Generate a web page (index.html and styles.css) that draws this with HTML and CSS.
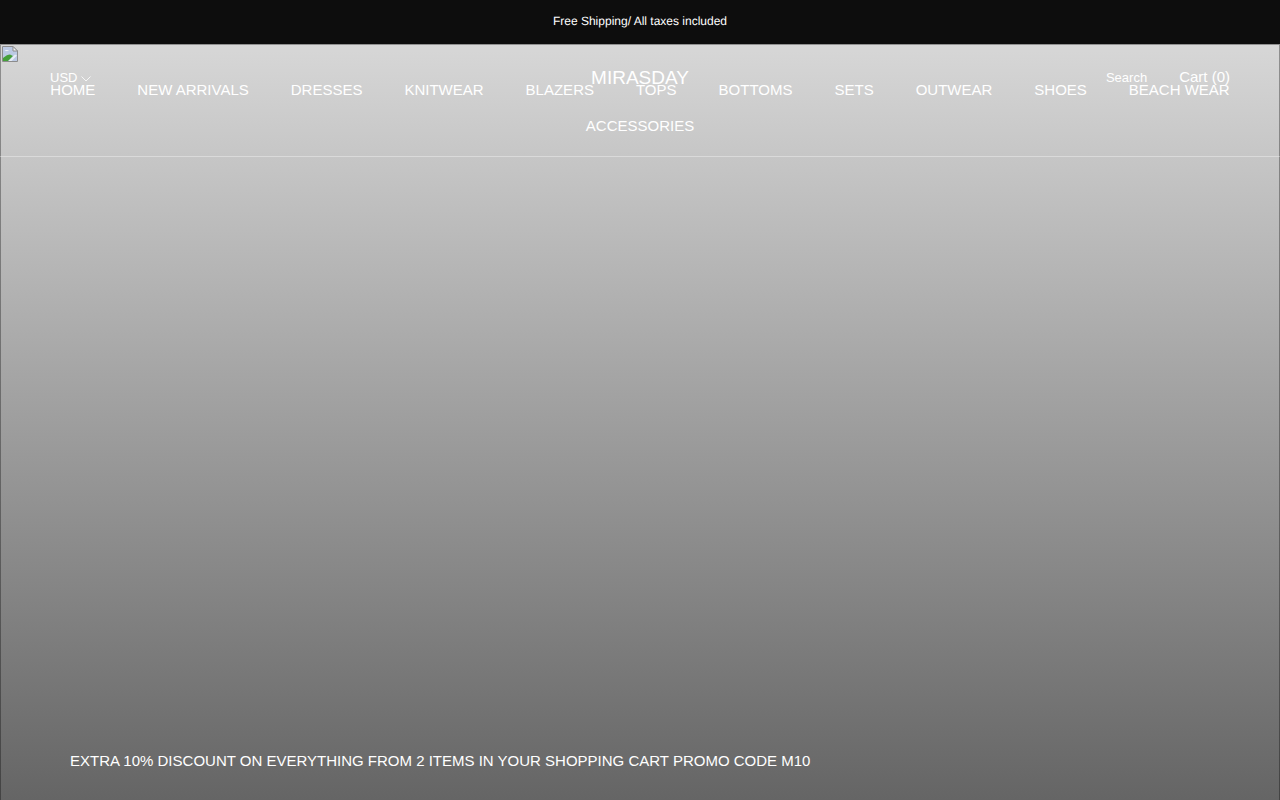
FILE: index.html
```html
<!DOCTYPE html>
<html lang="en">
<head>
    <meta charset="UTF-8">
    <meta name="viewport" content="width=device-width, initial-scale=1.0">
    <title>MIRASDAY</title>
    <link rel="stylesheet" href="styles.css">
</head>
<body>
    <div class="announcement">Free Shipping/ All taxes included</div>

    <section class="hero">
        <svg class="broken-image" width="16" height="16" viewBox="0 0 16 16">
            <path d="M.5.5h10.500l4.500 4.500v10.500h-15z" fill="#bccae4" stroke="#8c8c8c"/>
            <path d="M11 .5v4.500h4.500z" fill="#f2f2f2" stroke="#8c8c8c"/>
            <path d="M2.500 5c1-1.500 3.500-1.500 4.500 0z" fill="#f4f6fa"/>
            <path d="M1 15v-3c3-2.500 5-3.500 7-3.500l3 1.500-5 5z" fill="#45a03a"/>
            <path d="M6.500 15l6.500-6.500 2 1-5.500 5.500z" fill="#e8edf5"/>
        </svg>

        <header class="site-header">
            <div class="header-top">
                <div class="currency">USD
                    <svg class="chevron" width="10" height="6" viewBox="0 0 10 6"><path d="M.5.500l4.500 4.500 4.500-4.500" fill="none" stroke="#fff" stroke-width=".8"/></svg>
                </div>
                <a class="logo" href="#">MIRASDAY</a>
                <div class="header-links">
                    <a class="search-link" href="#">Search</a>
                    <a class="cart-link" href="#">Cart (0)</a>
                </div>
            </div>
            <nav class="main-nav">
                <a href="#">HOME</a>
                <a href="#">NEW ARRIVALS</a>
                <a href="#">DRESSES</a>
                <a href="#">KNITWEAR</a>
                <a href="#">BLAZERS</a>
                <a href="#">TOPS</a>
                <a href="#">BOTTOMS</a>
                <a href="#">SETS</a>
                <a href="#">OUTWEAR</a>
                <a href="#">SHOES</a>
                <a href="#">BEACH WEAR</a>
                <a href="#">ACCESSORIES</a>
            </nav>
        </header>

        <p class="promo">EXTRA 10% DISCOUNT ON EVERYTHING FROM 2 ITEMS IN YOUR SHOPPING CART PROMO CODE M10</p>
    </section>
</body>
</html>
```

FILE: styles.css
```css
html, body {
    height: 100%;
}
body {
    font-family: "Liberation Sans", Arial, sans-serif;
    margin: 0;
    background-color: #fff;
    color: #fff;
    overflow: hidden;
}
a {
    color: inherit;
    text-decoration: none;
}
.announcement {
    height: 44px;
    line-height: 42px;
    background-color: #0d0d0d;
    font-size: 12px;
    text-align: center;
    text-rendering: geometricPrecision;
}
.hero {
    position: relative;
    height: 756px;
    box-sizing: border-box;
    border: 1px solid rgba(0, 0, 0, 0.33);
    border-bottom: 0;
    background: linear-gradient(#d7d7d7, #656565) border-box;
}
.broken-image {
    position: absolute;
    top: 1px;
    left: 1px;
}
.site-header {
    position: absolute;
    top: 0;
    left: -1px;
    right: -1px;
    height: 112px;
    box-sizing: border-box;
    padding: 0 50px;
    border-bottom: 1px solid rgba(255, 255, 255, 0.35);
}
.header-top {
    display: grid;
    grid-template-columns: 1fr auto 1fr;
    align-items: center;
    height: 64px;
}
.currency {
    font-size: 13px;
}
.chevron {
    vertical-align: 0;
}
.logo {
    font-size: 19px;
    padding-top: 2px;
}
.header-links {
    display: flex;
    justify-content: flex-end;
    align-items: center;
    gap: 32px;
}
.search-link {
    font-size: 13px;
}
.cart-link {
    font-size: 15px;
    margin-top: -2px;
}
.main-nav {
    display: flex;
    flex-wrap: wrap;
    justify-content: center;
    column-gap: 42px;
    margin-top: -37px;
    line-height: 36px;
    font-size: 15px;
}
.promo {
    position: absolute;
    left: 69px;
    top: 707px;
    margin: 0;
    font-size: 15px;
}
```
